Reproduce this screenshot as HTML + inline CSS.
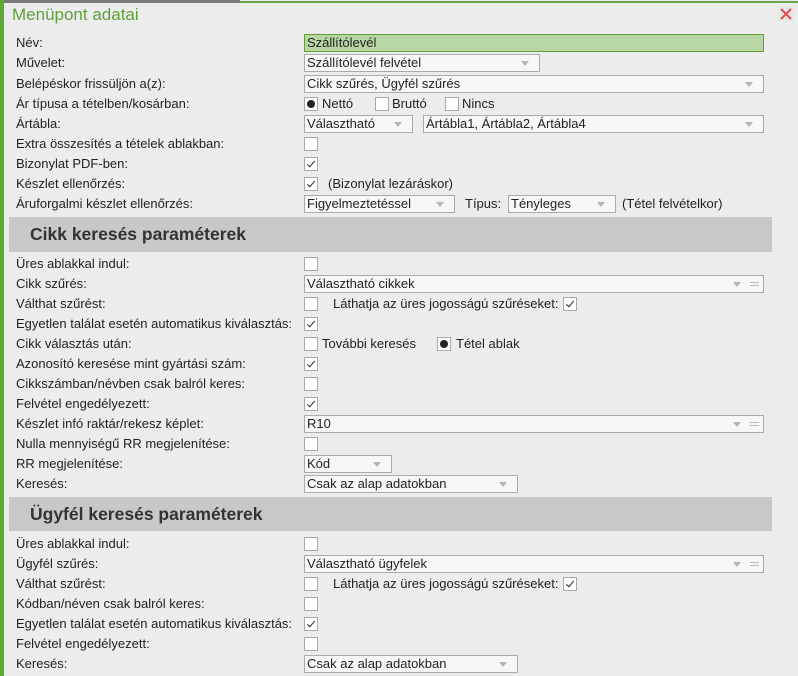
<!DOCTYPE html>
<html><head><meta charset="utf-8"><style>
*{margin:0;padding:0;box-sizing:border-box}
body{width:798px;height:676px;overflow:hidden;background:#ececec;font-family:"Liberation Sans",Arial,sans-serif;font-size:13px;color:#222;position:relative}
.a{position:absolute;white-space:nowrap}
.l{position:absolute;left:16px;line-height:18px;white-space:nowrap}
.cb{position:absolute;width:14px;height:14px;background:#fff;border:1px solid #a9a9a9}
.cb.c::after{content:"";position:absolute;left:4px;top:1px;width:3px;height:7px;border:solid #222;border-width:0 1.2px 1.2px 0;transform:rotate(40deg)}
.rd{position:absolute;width:14px;height:14px;background:#fff;border:1px solid #a9a9a9}
.rd::after{content:"";position:absolute;left:2px;top:2px;width:8px;height:8px;border-radius:50%;background:#222}
.s{position:absolute;height:18px;background:#f7f7f7;border:1px solid #aaa;line-height:16px;padding-left:2px;white-space:nowrap;overflow:hidden}
.s::after{content:"";position:absolute;right:10px;top:6px;border-left:4px solid transparent;border-right:4px solid transparent;border-top:5px solid #b5b5b5}
.s.eq::after{right:22px}
.eqi{position:absolute;right:4px;top:6px;width:9px;height:4px;border-top:1px solid #bbb;border-bottom:1px solid #bbb}
.h{position:absolute;left:9px;width:763px;background:#c8c8c8;font-weight:bold;font-size:17.5px;color:#333;padding-left:21px}
.t{position:absolute;line-height:18px;white-space:nowrap}
</style></head><body>
<div class="a" style="left:0;top:0;width:240px;height:3px;background:#7a7a7a"></div>
<div class="a" style="left:240px;top:1px;width:558px;height:2px;background:#6aa84f"></div>
<div class="a" style="left:0;top:0;width:4px;height:676px;background:#5ea83a"></div>
<div class="a" style="left:12px;top:5px;font-size:17px;color:#5fa03a">Menüpont adatai</div>
<div class="a" style="left:778px;top:6px;width:16px;height:16px;background:#e6e6e6"></div>
<svg class="a" style="left:780px;top:8px" width="12" height="12" viewBox="0 0 12 12"><path d="M1 1L11 11M11 1L1 11" stroke="#d9534f" stroke-width="2"/></svg>

<div class="l" style="top:34px">Név:</div>
<div class="a" style="left:304px;top:34px;width:460px;height:18px;background:#b7d6a3;border:1px solid #5fa03a;line-height:16px;padding-left:2px">Szállítólevél</div>
<div class="l" style="top:54px">Művelet:</div>
<div class="s" style="left:304px;top:54px;width:236px">Szállítólevél felvétel</div>
<div class="l" style="top:75px">Belépéskor frissüljön a(z):</div>
<div class="s" style="left:304px;top:75px;width:460px">Cikk szűrés, Ügyfél szűrés</div>
<div class="l" style="top:95px">Ár típusa a tételben/kosárban:</div>
<div class="rd" style="left:304px;top:97px"></div><div class="t" style="left:322px;top:95px">Nettó</div>
<div class="cb" style="left:375px;top:97px"></div><div class="t" style="left:392px;top:95px">Bruttó</div>
<div class="cb" style="left:445px;top:97px"></div><div class="t" style="left:462px;top:95px">Nincs</div>
<div class="l" style="top:115px">Ártábla:</div>
<div class="s" style="left:304px;top:115px;width:109px">Választható</div>
<div class="s" style="left:423px;top:115px;width:341px">Ártábla1, Ártábla2, Ártábla4</div>
<div class="l" style="top:135px">Extra összesítés a tételek ablakban:</div>
<div class="cb" style="left:304px;top:137px"></div>
<div class="l" style="top:155px">Bizonylat PDF-ben:</div>
<div class="cb c" style="left:304px;top:157px"></div>
<div class="l" style="top:175px">Készlet ellenőrzés:</div>
<div class="cb c" style="left:304px;top:177px"></div><div class="t" style="left:328px;top:175px">(Bizonylat lezáráskor)</div>
<div class="l" style="top:195px">Áruforgalmi készlet ellenőrzés:</div>
<div class="s" style="left:304px;top:195px;width:151px">Figyelmeztetéssel</div>
<div class="t" style="left:465px;top:195px">Típus:</div>
<div class="s" style="left:508px;top:195px;width:108px">Tényleges</div>
<div class="t" style="left:622px;top:195px">(Tétel felvételkor)</div>

<div class="h" style="top:217px;height:35px;line-height:35px">Cikk keresés paraméterek</div>

<div class="l" style="top:255px">Üres ablakkal indul:</div>
<div class="cb" style="left:304px;top:257px"></div>
<div class="l" style="top:275px">Cikk szűrés:</div>
<div class="s eq" style="left:304px;top:275px;width:460px">Választható cikkek<span class="eqi"></span></div>
<div class="l" style="top:295px">Válthat szűrést:</div>
<div class="cb" style="left:304px;top:297px"></div><div class="t" style="left:333px;top:295px">Láthatja az üres jogosságú szűréseket:</div><div class="cb c" style="left:563px;top:297px"></div>
<div class="l" style="top:315px">Egyetlen találat esetén automatikus kiválasztás:</div>
<div class="cb c" style="left:304px;top:317px"></div>
<div class="l" style="top:335px">Cikk választás után:</div>
<div class="cb" style="left:304px;top:337px"></div><div class="t" style="left:322px;top:335px">További keresés</div>
<div class="rd" style="left:437px;top:337px"></div><div class="t" style="left:456px;top:335px">Tétel ablak</div>
<div class="l" style="top:355px">Azonosító keresése mint gyártási szám:</div>
<div class="cb c" style="left:304px;top:357px"></div>
<div class="l" style="top:375px">Cikkszámban/névben csak balról keres:</div>
<div class="cb" style="left:304px;top:377px"></div>
<div class="l" style="top:395px">Felvétel engedélyezett:</div>
<div class="cb c" style="left:304px;top:397px"></div>
<div class="l" style="top:415px">Készlet infó raktár/rekesz képlet:</div>
<div class="s eq" style="left:304px;top:415px;width:460px">R10<span class="eqi"></span></div>
<div class="l" style="top:435px">Nulla mennyiségű RR megjelenítése:</div>
<div class="cb" style="left:304px;top:437px"></div>
<div class="l" style="top:455px">RR megjelenítése:</div>
<div class="s" style="left:304px;top:455px;width:88px">Kód</div>
<div class="l" style="top:475px">Keresés:</div>
<div class="s" style="left:304px;top:475px;width:214px">Csak az alap adatokban</div>

<div class="h" style="top:497px;height:34px;line-height:34px">Ügyfél keresés paraméterek</div>

<div class="l" style="top:535px">Üres ablakkal indul:</div>
<div class="cb" style="left:304px;top:537px"></div>
<div class="l" style="top:555px">Ügyfél szűrés:</div>
<div class="s eq" style="left:304px;top:555px;width:460px">Választható ügyfelek<span class="eqi"></span></div>
<div class="l" style="top:575px">Válthat szűrést:</div>
<div class="cb" style="left:304px;top:577px"></div><div class="t" style="left:333px;top:575px">Láthatja az üres jogosságú szűréseket:</div><div class="cb c" style="left:563px;top:577px"></div>
<div class="l" style="top:595px">Kódban/néven csak balról keres:</div>
<div class="cb" style="left:304px;top:597px"></div>
<div class="l" style="top:615px">Egyetlen találat esetén automatikus kiválasztás:</div>
<div class="cb c" style="left:304px;top:617px"></div>
<div class="l" style="top:635px">Felvétel engedélyezett:</div>
<div class="cb" style="left:304px;top:637px"></div>
<div class="l" style="top:655px">Keresés:</div>
<div class="s" style="left:304px;top:655px;width:214px">Csak az alap adatokban</div>
</body></html>
